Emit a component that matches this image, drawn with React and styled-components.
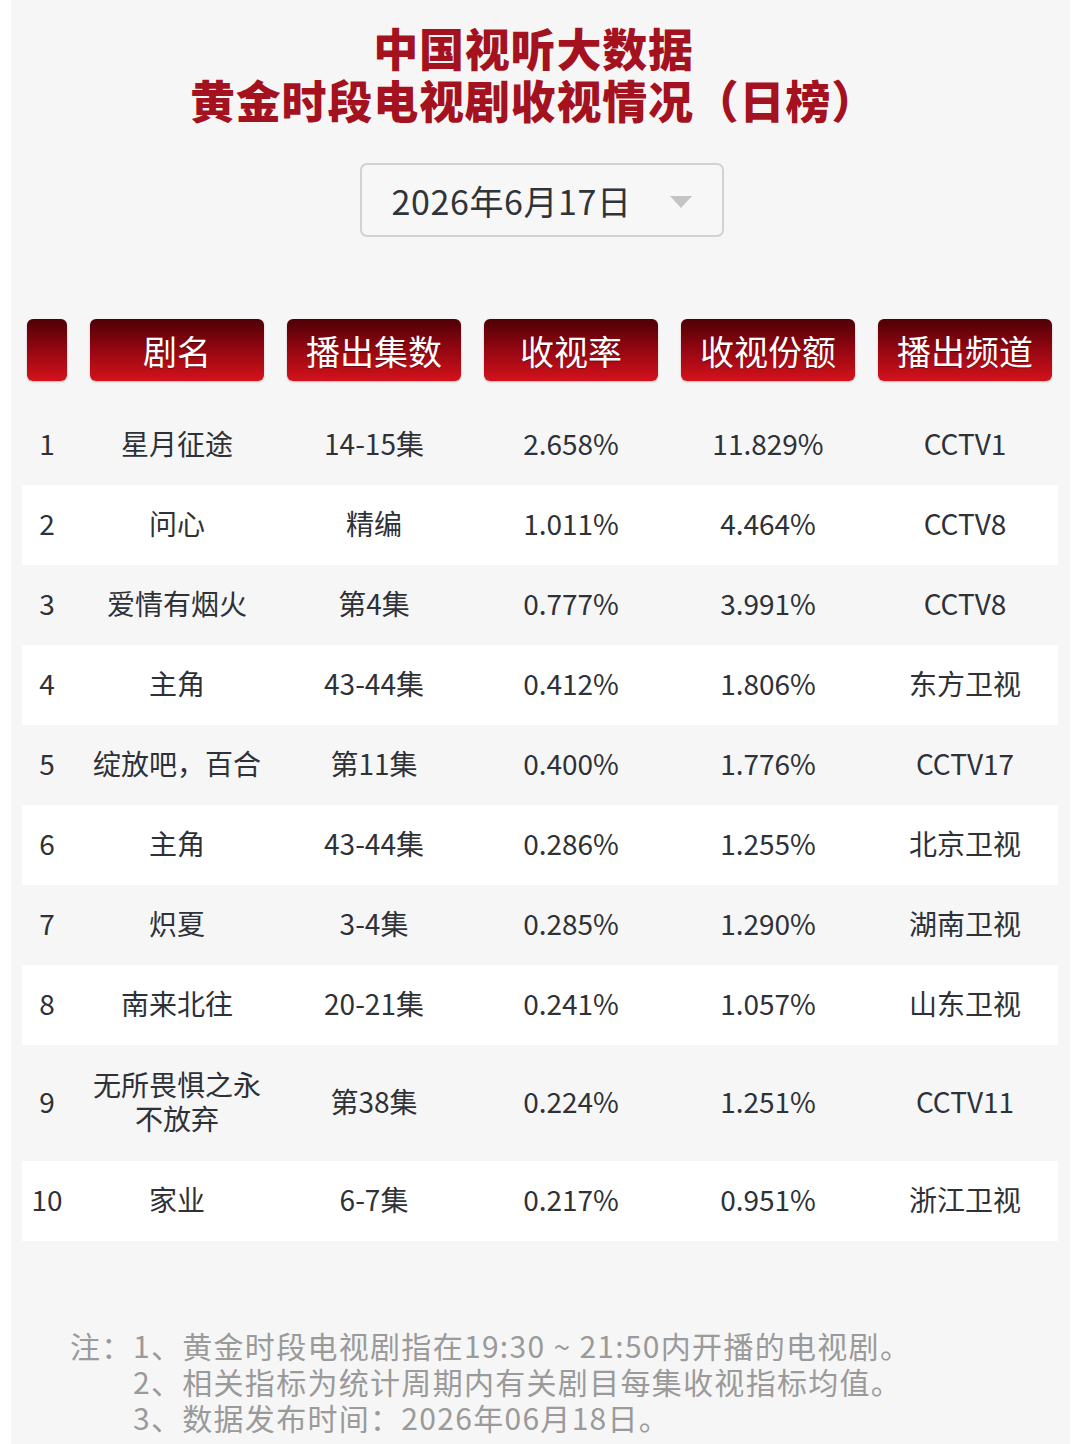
import React from 'react';
import styled, { createGlobalStyle } from 'styled-components';

const GlobalStyle = createGlobalStyle`
  html, body {
    margin: 0;
    padding: 0;
    background: #ffffff;
  }
  body {
    font-family: "Noto Sans CJK SC", "Noto Sans", sans-serif;
  }
`;

const Panel = styled.div`
  width: 1059px;
  height: 1444px;
  margin-left: 11px;
  background: #f6f6f6;
  box-sizing: border-box;
  padding-top: 22px;
  overflow: hidden;
`;

const Title = styled.h1`
  margin: 0;
  text-align: center;
  font-size: 45px;
  line-height: 52px;
  font-weight: 900;
  color: #a3121e;
  letter-spacing: 0.8px;
  padding-right: 14px;
  text-shadow: 0 0 1px rgba(255, 255, 255, 0.9);
`;

const DateWrap = styled.div`
  display: flex;
  justify-content: center;
  margin-top: 37px;
  padding-left: 2px;
`;

const DateSelect = styled.div`
  width: 364px;
  height: 74px;
  box-sizing: border-box;
  border: 2px solid #d2d2d2;
  border-radius: 7px;
  background: #f7f7f7;
  display: flex;
  align-items: center;
  padding-left: 30px;
  font-size: 34px;
  letter-spacing: 0.6px;
  color: #2f343a;
  gap: 38px;
`;

const Caret = styled.span`
  width: 0;
  height: 0;
  border-left: 11px solid transparent;
  border-right: 11px solid transparent;
  border-top: 12px solid #c4c4c4;
  margin-top: 4px;
`;

const Grid = styled.div`
  display: grid;
  grid-template-columns: 40px repeat(5, 174px);
  column-gap: 23px;
  align-items: center;
`;

const HeaderRow = styled(Grid)`
  margin-top: 82px;
  padding-left: 16px;
`;

const HeadCell = styled.div`
  height: 62px;
  border-radius: 6px;
  background: linear-gradient(to bottom, #4e0006 0%, #8e0610 45%, #d4121c 100%);
  box-shadow: 0 1px 2px rgba(0, 0, 0, 0.25);
  color: #ffffff;
  font-size: 34px;
  display: flex;
  align-items: center;
  justify-content: center;
  text-shadow: 0 1px 1px rgba(0, 0, 0, 0.35);
`;

const Body = styled.div`
  margin-top: 24px;
  margin-left: 11px;
  width: 1036px;
`;

const Row = styled(Grid)`
  box-sizing: border-box;
  padding-left: 5px;
  padding-bottom: 5px;
  height: ${p => (p.tall ? 116 : 80)}px;
  background: ${p => (p.striped ? '#ffffff' : 'transparent')};
`;

const Cell = styled.div`
  text-align: center;
  font-size: 28px;
  line-height: 34px;
  color: #2e3136;
`;

const Notes = styled.div`
  margin-top: 86px;
  padding-left: 59px;
  color: #9a9a9a;
  font-size: 30px;
  line-height: 36px;
  letter-spacing: 1.3px;
`;

const NoteLine = styled.div`
  display: flex;
  white-space: nowrap;
`;

const NoteLabel = styled.span`
  width: 63px;
  flex-shrink: 0;
`;

const headers = ['剧名', '播出集数', '收视率', '收视份额', '播出频道'];

const rows = [
  ['1', '星月征途', '14-15集', '2.658%', '11.829%', 'CCTV1'],
  ['2', '问心', '精编', '1.011%', '4.464%', 'CCTV8'],
  ['3', '爱情有烟火', '第4集', '0.777%', '3.991%', 'CCTV8'],
  ['4', '主角', '43-44集', '0.412%', '1.806%', '东方卫视'],
  ['5', '绽放吧，百合', '第11集', '0.400%', '1.776%', 'CCTV17'],
  ['6', '主角', '43-44集', '0.286%', '1.255%', '北京卫视'],
  ['7', '炽夏', '3-4集', '0.285%', '1.290%', '湖南卫视'],
  ['8', '南来北往', '20-21集', '0.241%', '1.057%', '山东卫视'],
  ['9', '无所畏惧之永\n不放弃', '第38集', '0.224%', '1.251%', 'CCTV11'],
  ['10', '家业', '6-7集', '0.217%', '0.951%', '浙江卫视'],
];

export default function App() {
  return (
    <>
      <GlobalStyle />
      <Panel>
        <Title>
          中国视听大数据
          <br />
          黄金时段电视剧收视情况（日榜）
        </Title>
        <DateWrap>
          <DateSelect>
            <span>2026年6月17日</span>
            <Caret />
          </DateSelect>
        </DateWrap>
        <HeaderRow>
          <HeadCell />
          {headers.map(h => (
            <HeadCell key={h}>{h}</HeadCell>
          ))}
        </HeaderRow>
        <Body>
          {rows.map((r, i) => (
            <Row key={i} striped={i % 2 === 1} tall={r[1].includes('\n')}>
              {r.map((c, j) => (
                <Cell key={j}>
                  {c.split('\n').map((part, k) => (
                    <div key={k}>{part}</div>
                  ))}
                </Cell>
              ))}
            </Row>
          ))}
        </Body>
        <Notes>
          <NoteLine>
            <NoteLabel>注：</NoteLabel>
            <span>1、黄金时段电视剧指在19:30 ~ 21:50内开播的电视剧。</span>
          </NoteLine>
          <NoteLine>
            <NoteLabel />
            <span>2、相关指标为统计周期内有关剧目每集收视指标均值。</span>
          </NoteLine>
          <NoteLine>
            <NoteLabel />
            <span>3、数据发布时间：2026年06月18日。</span>
          </NoteLine>
        </Notes>
      </Panel>
    </>
  );
}
